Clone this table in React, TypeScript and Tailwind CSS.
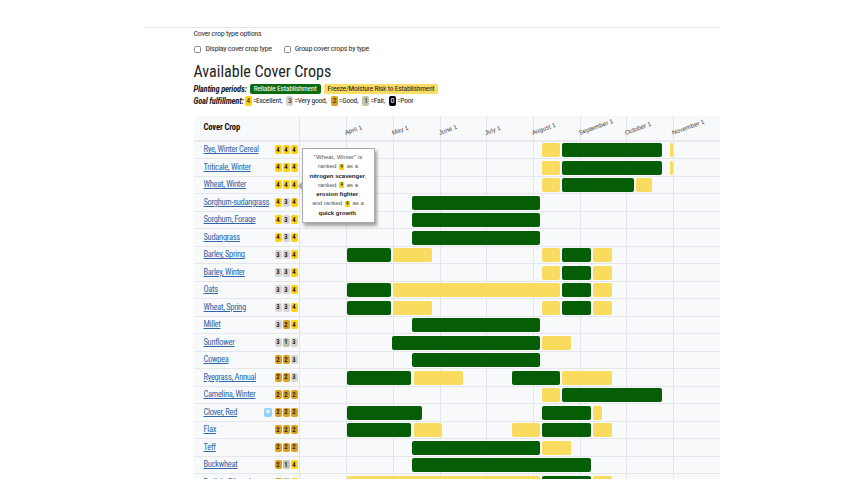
import React from "react";

type Bar = [number, number, "g" | "y"];
type Crop = { name: string; r: number[]; bars: Bar[]; frost?: boolean };

const crops: Crop[] = [
  { name: "Rye, Winter Cereal", r: [4, 4, 4], bars: [[542.7, 560.7, "y"], [562.7, 662.3, "g"], [670, 673, "y"]] },
  { name: "Triticale, Winter", r: [4, 4, 4], bars: [[542.7, 560.7, "y"], [562.7, 662.3, "g"], [670, 673, "y"]] },
  { name: "Wheat, Winter", r: [4, 4, 4], bars: [[542.7, 560.7, "y"], [562.7, 634.3, "g"], [636.7, 652.7, "y"]] },
  { name: "Sorghum-sudangrass", r: [4, 3, 4], bars: [[412, 540.7, "g"]] },
  { name: "Sorghum, Forage", r: [4, 3, 4], bars: [[412, 540.7, "g"]] },
  { name: "Sudangrass", r: [4, 3, 4], bars: [[412, 540.7, "g"]] },
  { name: "Barley, Spring", r: [3, 3, 4], bars: [[347.3, 392, "g"], [393.7, 433, "y"], [542.7, 560.7, "y"], [562.7, 591.7, "g"], [593.7, 613, "y"]] },
  { name: "Barley, Winter", r: [3, 3, 4], bars: [[542.7, 560.7, "y"], [562.7, 591.7, "g"], [593.7, 613, "y"]] },
  { name: "Oats", r: [3, 3, 4], bars: [[347.3, 392, "g"], [393.7, 560.7, "y"], [562.7, 591.7, "g"], [593.7, 613, "y"]] },
  { name: "Wheat, Spring", r: [3, 3, 4], bars: [[347.3, 392, "g"], [393.7, 433, "y"], [542.7, 560.7, "y"], [562.7, 591.7, "g"], [593.7, 613, "y"]] },
  { name: "Millet", r: [3, 2, 4], bars: [[412, 540.7, "g"]] },
  { name: "Sunflower", r: [3, 1, 3], bars: [[392.3, 540.7, "g"], [542.7, 571.3, "y"]] },
  { name: "Cowpea", r: [2, 2, 3], bars: [[412, 540.7, "g"]] },
  { name: "Ryegrass, Annual", r: [2, 2, 3], bars: [[347.3, 411.7, "g"], [414, 463.7, "y"], [512, 560.7, "g"], [562.7, 613, "y"]] },
  { name: "Camelina, Winter", r: [2, 2, 2], bars: [[542.7, 560.7, "y"], [562.7, 662.3, "g"]] },
  { name: "Clover, Red", r: [2, 2, 2], frost: true, bars: [[347.3, 422.3, "g"], [542.7, 591.7, "g"], [593.7, 602.3, "y"]] },
  { name: "Flax", r: [2, 2, 2], bars: [[347.3, 411.7, "g"], [414, 442.3, "y"], [512, 540.7, "y"], [542.7, 591.7, "g"], [593.7, 613, "y"]] },
  { name: "Teff", r: [2, 2, 2], bars: [[412, 540.7, "g"], [542.7, 571.3, "y"]] },
  { name: "Buckwheat", r: [2, 1, 4], bars: [[412, 591.7, "g"]] },
  { name: "Radish, Oilseed", r: [2, 1, 4], bars: [[347.3, 540.7, "y"], [542.7, 591.7, "g"], [593.7, 613, "y"]] },
];

const months = ["April 1", "May 1", "June 1", "July 1", "August 1", "September 1", "October 1", "November 1"];

const badgeColor: Record<number, string> = {
  4: "bg-[#fdd30b] text-[#222]",
  3: "bg-[#d6d6d6] text-[#222]",
  2: "bg-[#d9a11c] text-[#222]",
  1: "bg-[#c6c3a6] text-[#222]",
  0: "bg-black text-white",
};

const narrow = "[font-family:'Roboto_Condensed','Liberation_Sans',sans-serif]";

function Rating({ v }: { v: number }) {
  return (
    <span className={`flex h-[9px] w-[7px] items-center justify-center rounded-[2px] text-[6.5px] font-bold leading-none ${badgeColor[v]}`}>
      {v}
    </span>
  );
}

function Grid() {
  return (
    <div className="absolute inset-0 grid grid-cols-9">
      {Array.from({ length: 9 }).map((_, i) => (
        <div key={i} className={i === 0 ? "" : "border-l border-[#e4e5e8]"} />
      ))}
    </div>
  );
}

function LegendBadge({ v, label }: { v: number; label: string }) {
  return (
    <span className="flex items-center">
      <span className={`flex h-[10px] w-[7px] items-center justify-center rounded-[2px] text-[8px] leading-none ${badgeColor[v]}`}>{v}</span>
      <span className="ml-[1px]">{label}</span>
    </span>
  );
}

function TinyFour() {
  return (
    <span className="mx-[1px] inline-block h-[6px] w-[5px] rounded-[1px] bg-[#fdd30b] text-center align-middle text-[4.5px] font-bold leading-[6px] text-[#222]">
      4
    </span>
  );
}

export default function App() {
  return (
    <div className="min-h-[504px] bg-white pt-[27px]">
      <div className={`mx-auto w-[575px] border-t border-[#e6e6e6] pl-[49px] ${narrow} text-[#222]`}>
        <div className="whitespace-nowrap text-[8px] leading-[12px] tracking-[-0.3px] text-[#333]">Cover crop type options</div>
        <div className="mt-[3px] flex h-[12px] items-center whitespace-nowrap text-[8px] tracking-[-0.3px] text-[#333]">
          <span className="h-[7px] w-[7px] rounded-[1.5px] border border-[#8a8a8a] bg-white" />
          <span className="ml-[5px]">Display cover crop type</span>
          <span className="ml-[12px] h-[7px] w-[7px] rounded-[1.5px] border border-[#8a8a8a] bg-white" />
          <span className="ml-[4px]">Group cover crops by type</span>
        </div>
        <div className="mt-[8px] h-[18px] whitespace-nowrap text-[16px] leading-[18px] text-[#222]">Available Cover Crops</div>
        <div className="mt-[2.5px] flex h-[11px] items-center whitespace-nowrap text-[7.5px] tracking-[-0.2px]">
          <span className="text-[8.5px] font-bold italic">Planting periods:</span>
          <span className="ml-[3px] flex h-[10px] items-center rounded-[2px] bg-[#0d6b12] px-[4px] text-white">Reliable Establishment</span>
          <span className="ml-[3px] flex h-[10px] items-center rounded-[2px] bg-[#f9dc62] px-[4px] text-[#222]">Freeze/Moisture Risk to Establishment</span>
        </div>
        <div className="mt-[1px] flex h-[11px] items-center gap-[4px] whitespace-nowrap text-[7.5px] tracking-[-0.2px]">
          <span className="mr-[-3px] text-[8.5px] font-bold italic">Goal fulfillment:</span>
          <LegendBadge v={4} label="=Excellent," />
          <LegendBadge v={3} label="=Very good," />
          <LegendBadge v={2} label="=Good," />
          <LegendBadge v={1} label="=Fair," />
          <LegendBadge v={0} label="=Poor" />
        </div>

        <div className="relative mt-[9.5px] h-[363px] w-[526px] overflow-hidden bg-[#f8f9fa]">
          <div className="flex h-[25.5px] border-b-2 border-[#e9eaed]">
            <div className="flex w-[106px] items-center border-r border-[#e2e3e6] pl-[10px] text-[8.5px] font-bold tracking-[-0.1px] text-[#111]">Cover Crop</div>
            <div className="relative w-[420px]">
              <Grid />
              {months.map((m, i) => (
                <span
                  key={m}
                  className="absolute top-[13px] origin-bottom-left -rotate-[20deg] whitespace-nowrap [font-family:'Liberation_Sans',sans-serif] text-[6.3px] leading-[7px] text-[#444]"
                  style={{ left: 46.67 * (i + 1) }}
                >
                  {m}
                </span>
              ))}
            </div>
          </div>
          {crops.map((c) => (
            <div key={c.name} className="flex h-[17.5px] border-b border-[#e6e7ea]">
              <div className="flex w-[106px] items-center justify-between border-r border-[#e2e3e6] pl-[10px] pr-[1px]">
                <a className="whitespace-nowrap text-[8.5px] tracking-[-0.3px] text-[#2f67a8] underline">{c.name}</a>
                <span className="flex items-center gap-[1px]">
                  {c.frost && (
                    <span className="mr-[2px] flex h-[9px] w-[8px] items-center justify-center rounded-[2px] bg-[#8fd1f6] text-[7px] leading-none text-white">❄</span>
                  )}
                  {c.r.map((v, i) => (
                    <Rating key={i} v={v} />
                  ))}
                </span>
              </div>
              <div className="relative w-[420px]">
                <Grid />
                {c.bars.map(([s, e, t], i) => (
                  <div
                    key={i}
                    className={`absolute top-[1.5px] h-[14px] rounded-[2px] ${t === "g" ? "bg-[#055e06]" : "bg-[#f9dc5e]"}`}
                    style={{ left: s - 300, width: e - s }}
                  />
                ))}
              </div>
            </div>
          ))}

          <div className="absolute left-[108px] top-[32px] w-[73px] border border-[#a9a9a9] bg-white px-[2px] py-[4px] text-center [font-family:'Liberation_Sans',sans-serif] text-[6px] leading-[9.3px] text-[#555] shadow-[2px_3px_3px_rgba(0,0,0,0.35)]">
            <span className="absolute left-[-5px] top-[33px] h-0 w-0 border-y-[4px] border-r-[4px] border-y-transparent border-r-[#a9a9a9]" />
            <div>"Wheat, Winter" is</div>
            <div>ranked <TinyFour /> as a</div>
            <div className="font-bold text-[#222]">nitrogen scavenger<span className="font-normal text-[#555]">,</span></div>
            <div>ranked <TinyFour /> as a</div>
            <div className="font-bold text-[#222]">erosion fighter<span className="font-normal text-[#555]">,</span></div>
            <div>and ranked <TinyFour /> as a</div>
            <div className="font-bold text-[#222]">quick growth<span className="font-normal text-[#555]">.</span></div>
          </div>
        </div>
      </div>
    </div>
  );
}
